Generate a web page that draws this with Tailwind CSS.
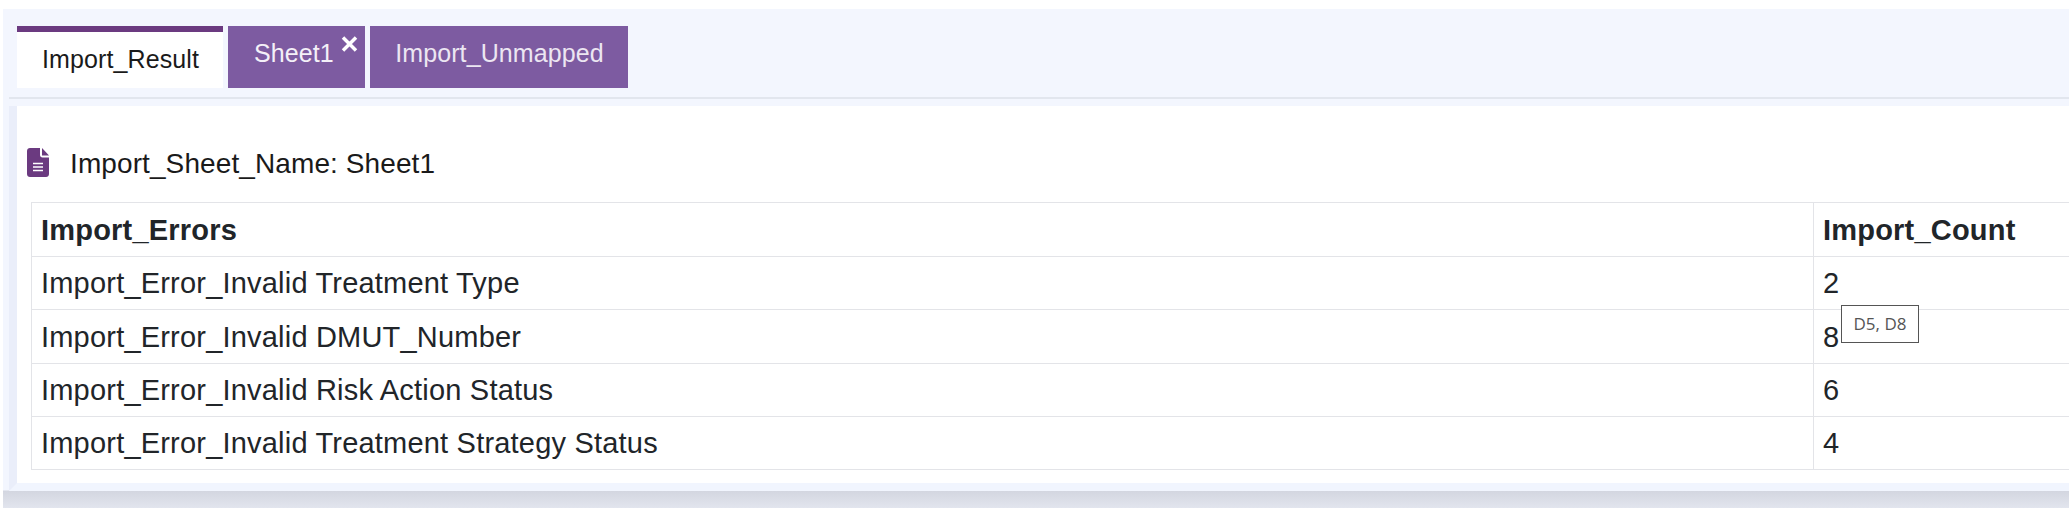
<!DOCTYPE html>
<html>
<head>
<meta charset="utf-8">
<script src="https://cdn.jsdelivr.net/npm/@tailwindcss/browser@4"></script>
</head>
<body class="bg-white h-[514px] overflow-hidden font-['Liberation_Sans',Arial,sans-serif] text-[#212529]">
<div class="pt-[9px] pl-[3px] h-[508px]">
  <div class="h-[499px] pl-[6px] bg-[linear-gradient(to_bottom,#f3f6fe_0,#f3f6fe_481px,#d3d6e0_482px,#e2e5ee_499px)]">
    <div class="pl-[8px] pt-[17px] h-[90px] border-b-2 border-[#e2e6ee] flex gap-[5px] items-start">
      <div class="shrink-0 w-[206px] h-[62px] bg-white border-t-[6px] border-[#6b3a80] flex items-center justify-center pl-[1px] text-[25px] tracking-[0.1px] text-[#1a1a1a]">Import_Result</div>
      <div class="relative shrink-0 w-[137px] h-[62px] bg-[#7d5ba1] text-[#f4f0f8] flex items-center pl-[26px] pb-[6px] text-[25px] tracking-[0.1px]">Sheet1
        <svg class="absolute left-[113px] top-[10px]" width="17" height="16" viewBox="0 0 17 16"><path d="M2 1.500 15 14.500M15 1.500 2 14.500" stroke="#fff" stroke-width="3.500"/></svg>
      </div>
      <div class="shrink-0 w-[258px] h-[62px] bg-[#7d5ba1] text-[#ece6f2] flex items-center justify-center pl-[1px] pb-[6px] text-[25px] tracking-[0.1px]">Import_Unmapped</div>
    </div>
    <div class="mt-[7px] h-[385px] border-l-[8px] border-b-[8px] border-l-[#eaeefa] border-b-[#f1f5fe]">
      <div class="bg-white h-[377px] pl-[10px] pt-[30px]">
        <div class="flex items-center h-[56px] mb-[10px] text-[28px] tracking-[0.1px] text-[#1a1a1a]">
          <svg class="mr-[21px] shrink-0 -mt-[3px]" width="22" height="29" viewBox="0 0 22 29"><path fill="#6b3a80" d="M3 0H13V7C13 8.500 14 9.500 15.500 9.500H22V26C22 27.700 20.700 29 19 29H3C1.300 29 0 27.700 0 26V3C0 1.300 1.300 0 3 0Z"/><path fill="#6b3a80" d="M15 0 22 7.500H15Z"/><path stroke="#fff" stroke-width="1.700" d="M6 15.500H16M6 19H16M6 22.500H16"/></svg>
          Import_Sheet_Name: Sheet1
        </div>
        <div class="relative ml-[4px] w-[2100px]">
          <table class="border-collapse w-full table-fixed text-[29px] text-[#212529] tracking-[0.2px]">
            <colgroup><col class="w-[1782px]"><col></colgroup>
            <thead>
              <tr class="h-[54px]"><th class="border border-[#e3e4e8] px-[9px] pt-[2px] text-left font-bold">Import_Errors</th><th class="border border-[#e3e4e8] px-[9px] pt-[2px] text-left font-bold">Import_Count</th></tr>
            </thead>
            <tbody>
              <tr class="h-[53px]"><td class="border border-[#e3e4e8] px-[9px] pt-[2px]">Import_Error_Invalid Treatment Type</td><td class="border border-[#e3e4e8] px-[9px] pt-[2px]">2</td></tr>
              <tr class="h-[54px]"><td class="border border-[#e3e4e8] px-[9px] pt-[2px]">Import_Error_Invalid DMUT_Number</td><td class="border border-[#e3e4e8] px-[9px] pt-[2px]">8</td></tr>
              <tr class="h-[53px]"><td class="border border-[#e3e4e8] px-[9px] pt-[2px]">Import_Error_Invalid Risk Action Status</td><td class="border border-[#e3e4e8] px-[9px] pt-[2px]">6</td></tr>
              <tr class="h-[53px]"><td class="border border-[#e3e4e8] px-[9px] pt-[2px]">Import_Error_Invalid Treatment Strategy Status</td><td class="border border-[#e3e4e8] px-[9px] pt-[2px]">4</td></tr>
            </tbody>
          </table>
          <div class="absolute left-[1810px] top-[103px] w-[78px] h-[38px] bg-white border border-[#555] flex items-center justify-center text-[17px] text-[#555] font-['Open_Sans',sans-serif]">D5, D8</div>
        </div>
      </div>
    </div>
  </div>
</div>
</body>
</html>
